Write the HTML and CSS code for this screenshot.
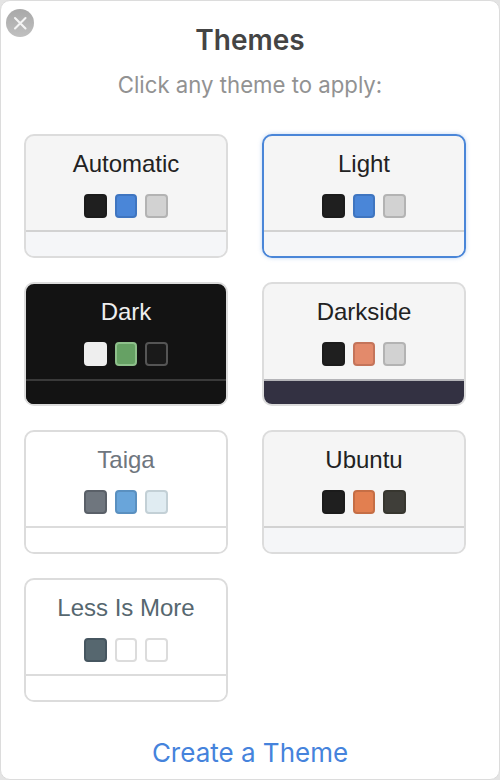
FILE: index.html
```html
<!DOCTYPE html>
<html lang="en">
<head>
    <meta charset="UTF-8">
    <meta name="viewport" content="width=device-width, initial-scale=1.0">
    <title>Themes</title>
    <link rel="stylesheet" href="styles.css">
</head>
<body>
    <div class="modal">
        <button class="close-button" aria-label="Close">
            <svg viewBox="0 0 28 28" width="28" height="28">
                <path d="M9 9 L19.5 19.5 M19.5 9 L9 19.5" stroke="#f4f4f4" stroke-width="2.1" stroke-linecap="round" fill="none"/>
            </svg>
        </button>

        <h2 class="title">Themes</h2>
        <p class="subtitle">Click any theme to apply:</p>

        <div class="theme-grid">
            <div class="theme automatic">
                <div class="theme-top">
                    <div class="theme-name">Automatic</div>
                    <div class="swatches"><span class="swatch one"></span><span class="swatch two"></span><span class="swatch three"></span></div>
                </div>
                <div class="theme-bar"></div>
            </div>
            <div class="theme light selected">
                <div class="theme-top">
                    <div class="theme-name">Light</div>
                    <div class="swatches"><span class="swatch one"></span><span class="swatch two"></span><span class="swatch three"></span></div>
                </div>
                <div class="theme-bar"></div>
            </div>
            <div class="theme dark">
                <div class="theme-top">
                    <div class="theme-name">Dark</div>
                    <div class="swatches"><span class="swatch one"></span><span class="swatch two"></span><span class="swatch three"></span></div>
                </div>
                <div class="theme-bar"></div>
            </div>
            <div class="theme darkside">
                <div class="theme-top">
                    <div class="theme-name">Darkside</div>
                    <div class="swatches"><span class="swatch one"></span><span class="swatch two"></span><span class="swatch three"></span></div>
                </div>
                <div class="theme-bar"></div>
            </div>
            <div class="theme taiga">
                <div class="theme-top">
                    <div class="theme-name">Taiga</div>
                    <div class="swatches"><span class="swatch one"></span><span class="swatch two"></span><span class="swatch three"></span></div>
                </div>
                <div class="theme-bar"></div>
            </div>
            <div class="theme ubuntu">
                <div class="theme-top">
                    <div class="theme-name">Ubuntu</div>
                    <div class="swatches"><span class="swatch one"></span><span class="swatch two"></span><span class="swatch three"></span></div>
                </div>
                <div class="theme-bar"></div>
            </div>
            <div class="theme less">
                <div class="theme-top">
                    <div class="theme-name">Less Is More</div>
                    <div class="swatches"><span class="swatch one"></span><span class="swatch two"></span><span class="swatch three"></span></div>
                </div>
                <div class="theme-bar"></div>
            </div>
        </div>

        <a class="create-link" href="#create">Create a Theme</a>
    </div>
</body>
</html>
```

FILE: styles.css
```css
html, body {
    margin: 0;
    height: 100%;
    background-color: #e4e4e4;
}
.modal {
    position: relative;
    box-sizing: border-box;
    height: 780px;
    padding: 23px 23px 0;
    background-color: #fff;
    border: 1px solid #dcdcdc;
    border-radius: 10px;
    font-family: "Inter", sans-serif;
    text-align: center;
}
.close-button {
    position: absolute;
    top: 8px;
    left: 5px;
    width: 28px;
    height: 28px;
    padding: 0;
    border: none;
    border-radius: 50%;
    background: linear-gradient(180deg, #a8a8a8, #c0c0c0);
    cursor: pointer;
}
.close-button svg {
    display: block;
}
.title {
    margin: 0;
    font-size: 28px;
    line-height: 32px;
    font-weight: 600;
    color: #444;
}
.subtitle {
    margin: 14px 0 0;
    font-size: 22.2px;
    line-height: 30px;
    font-weight: 400;
    color: #929292;
}
.theme-grid {
    display: grid;
    grid-template-columns: 204px 204px;
    grid-auto-rows: 124px;
    column-gap: 34px;
    row-gap: 24px;
    margin-top: 34px;
}
.theme {
    display: flex;
    flex-direction: column;
    box-sizing: border-box;
    overflow: hidden;
    border: 2px solid #dcdcdc;
    border-radius: 10px;
    font-family: "Liberation Sans", Arial, sans-serif;
    background-color: #f5f5f5;
    cursor: pointer;
}
.theme-top {
    height: 94px;
    box-sizing: border-box;
    padding-top: 13px;
}
.dark .theme-top, .darkside .theme-top {
    height: 95px;
}
.theme-name {
    font-size: 24px;
    line-height: 30px;
    color: #222;
}
.swatches {
    display: flex;
    justify-content: center;
    gap: 8px;
    margin-top: 15px;
}
.swatch {
    box-sizing: border-box;
    width: 23px;
    height: 24px;
    border: 2px solid;
    border-radius: 4px;
}
.swatch.two {
    width: 22px;
}
.theme-bar {
    flex: 1;
    border-top: 2px solid #d2d2d2;
    background-color: #f5f6f8;
}

.automatic .one, .light .one, .darkside .one, .ubuntu .one {
    background-color: #1f1f1f;
    border-color: #1b1b1b;
}
.automatic .two, .light .two {
    background-color: #4a86d8;
    border-color: #3f75c0;
}
.automatic .three, .light .three, .darkside .three {
    background-color: #d2d2d2;
    border-color: #b3b3b3;
}

.selected {
    border-color: #4a86d8;
    box-shadow: 0 0 4px rgba(74, 134, 216, 0.35);
}

.dark {
    background-color: #131313;
}
.dark .theme-name {
    color: #eee;
}
.dark .theme-bar {
    background-color: #131313;
    border-top-color: #3a3a3a;
}
.dark .one {
    background-color: #eee;
    border-color: #eee;
}
.dark .two {
    background-color: #66a164;
    border-color: #8ec08b;
}
.dark .three {
    background-color: #1a1a1a;
    border-color: #555;
}

.darkside .two {
    background-color: #e38a6b;
    border-color: #c4745a;
}
.darkside .theme-bar {
    background-color: #333142;
    border-top-color: #b4b4b8;
}

.taiga, .less {
    background-color: #fff;
}
.taiga .theme-bar, .less .theme-bar {
    background-color: #fff;
    border-top-color: #dcdcdc;
}
.taiga .theme-name {
    color: #6f767e;
}
.taiga .one {
    background-color: #6f767e;
    border-color: #5a6068;
}
.taiga .two {
    background-color: #69a5da;
    border-color: #5a90c0;
}
.taiga .three {
    background-color: #e0ecf2;
    border-color: #c3d0d6;
}

.ubuntu .two {
    background-color: #e27f50;
    border-color: #c56e45;
}
.ubuntu .three {
    background-color: #3f3e39;
    border-color: #37362f;
}

.less .theme-name {
    color: #56676f;
}
.less .one {
    background-color: #56676f;
    border-color: #465660;
}
.less .two, .less .three {
    background-color: #fff;
    border-color: #dcdcdc;
}

.create-link {
    display: block;
    margin-top: 35px;
    font-size: 26px;
    line-height: 32px;
    color: #4583dc;
    text-decoration: none;
}
```
